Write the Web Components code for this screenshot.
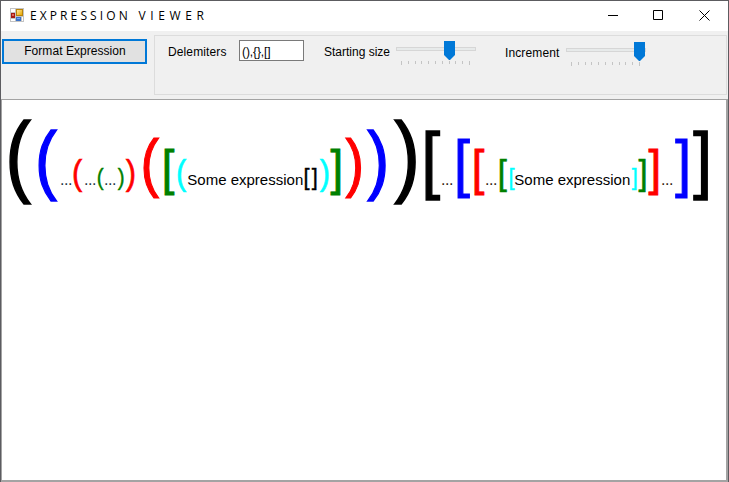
<!DOCTYPE html>
<html lang="en"><head><meta charset="utf-8"><title>Expression Viewer</title>
<style>html,body{margin:0;width:729px;height:482px;overflow:hidden;background:#fff}</style></head>
<body><expression-window></expression-window>
<script>
class Part extends HTMLElement{
  connectedCallback(){this.attachShadow({mode:'open'}).innerHTML=this.view()}
}
customElements.define('title-bar',class extends Part{view(){return `<style>
:host{display:flex;height:30px;background:#fff;align-items:center;box-sizing:border-box;padding-left:9px;font:12px "Open Sans","Noto Sans",sans-serif;color:#000}
.icon{width:14px;height:14px;margin-right:6px;flex:none;position:relative;top:-1px}
.name{flex:1;white-space:pre;letter-spacing:3.1px;line-height:16px}
.wide{letter-spacing:4.6px}
.controls{display:flex;height:30px}.controls svg{width:46px;height:30px;display:block;fill:none;stroke:#000}
</style>
<svg class="icon" viewBox="0 0 14 14"><path fill="#c3c3c3" d="M0 0h14v14H0z"/><path fill="#fff" d="M1 1h4v3H1zM1 11h4v2H1zM12 9h1v4h-1z"/><defs><linearGradient id="y" x2="1" y2="1"><stop stop-color="#ffe79a"/><stop offset="1" stop-color="#e8a800"/></linearGradient></defs><path fill="#b98308" d="M6 1h7v7H6z"/><path fill="url(#y)" d="M7 2h5v5H7z"/><path fill="#a51b13" d="M1 5h4v5H1z"/><path fill="#e0675b" d="M2 6h2v2H2z"/><path fill="#3c72c8" d="M6 9h5v4H6z"/><path fill="#78aaf0" d="M7 10h3v1H7z"/></svg>
<span class="name">EXPRESSION<span class="wide"> VIEWER</span></span>
<div class="controls"><svg><path d="M18 14.500h10"/></svg><svg><path d="M17.500 9.500h9v9h-9z"/></svg><svg><path d="M17.500 9.500l10 10m0-10l-10 10"/></svg></div>`}});
customElements.define('push-button',class extends Part{view(){return `<style>
:host{display:block;width:145px;height:25px;box-sizing:border-box}
button{display:block;width:100%;height:100%;padding:0 0 0 1px;border:2px solid #0078d7;background:#e1e1e1;color:#000;font:12px/21px "Liberation Sans",Arial,sans-serif;letter-spacing:.05px}
</style><button><slot></slot></button>`}});
customElements.define('track-bar',class extends Part{view(){const v=+this.getAttribute('value');return `<style>
:host{display:block;width:80px;height:26px}svg{display:block;overflow:visible}
</style><svg width="80" height="26"><rect x=".5" y="7.500" width="79" height="3" fill="#e7eaea" stroke="#d6d6d6"/><path stroke="#c4c4c4" d="${Array.from({length:11},(_,i)=>`M${Math.round(5+i*6.8)+.5} ${21}v${i%10?3:4}`).join('')}"/><path fill="#0078d7" d="M${v} 1h11v14l-5 5h-1l-5-5z"/></svg>`}});
customElements.define('tool-panel',class extends Part{view(){return `<style>
:host{display:flex;height:68px;background:#f0f0f0;box-sizing:border-box;padding:4px 1px 4px 1px;font:12px/15px "Liberation Sans",Arial,sans-serif;letter-spacing:.12px;color:#000}
push-button{margin:4px 7px 0 0;flex:none}
fieldset{flex:1;margin:0;padding:0;min-width:0;border:1px solid #dcdcdc;box-sizing:border-box;display:flex;align-items:flex-start}
label{white-space:nowrap;flex:none}
input{box-sizing:border-box;width:65px;height:21px;border:1px solid #7a7a7a;background:#fff;padding:2px 2px 0;margin:4px 20px 0 0;font:12px/15px "Liberation Sans",Arial,sans-serif;letter-spacing:-.1px;color:#000;flex:none}
</style><push-button>Format Expression</push-button><fieldset>
<label style="width:71px;margin:9px 0 0 13px">Delemiters</label><input value="(),{},[]">
<label style="width:72px;margin-top:9px;letter-spacing:0">Starting size</label><track-bar value="48" style="margin-top:4px"></track-bar>
<label style="width:61px;margin:10px 0 0 29px">Increment</label><track-bar value="68" style="margin-top:5px"></track-bar>
</fieldset>`}});
customElements.define('expression-view',class extends Part{view(){
const tokens=[['(','#000',90,9],['(','#00f',77,38.5],['...','#234',16,61],['(','red',36,73.5],['...','#234',16,85],['(','green',24,97],['...','#234',16,105],[')','green',24,117.5],[')','red',36,125.5],['(','red',65,143],['[','green',50,164],['(','cyan',36,177],['Some expression','#000',15,187.5],['[','#000',24,304.5],[']','#000',24,311],[')','cyan',36,319],[']','green',50,330],[')','red',65,345.5],[')','#00f',77,367.5],[')','#000',90,394],['[','#000',75,425],['...','#321',16,442],['[','#00f',63,457],['[','red',50,474],['...','#321',16,486],['[','green',36,499],['[','cyan',24,509],['Some expression','#000',15,514.5],[']','cyan',24,631],[']','green',36,638],[']','red',50,648],['...','#321',16,662],[']','#00f',63,675],[']','#000',75,693]];
// Side bearings in em, so each token box begins at its ink.
const bearing={'(':.061,')':.01,'[':.07,']':.012,'.':.09,'S':.045};
return `<style>
:host{display:flex;height:383px;box-sizing:border-box;border:1px solid #a3a3a3;border-right-width:2px;border-bottom-width:2px;background:#fff;padding-left:7.5px;align-items:baseline;font-family:"Liberation Sans",Arial,sans-serif;overflow:hidden}
span{flex:none;white-space:pre;line-height:1}i{display:inline-block;height:85px;width:0}
.mark{-webkit-text-stroke:.018em currentColor;transform-origin:0 0}
.round{transform:scaleX(.87)}.square{transform:scaleX(.92)}
.dots{letter-spacing:-.45px}
</style><i></i>${tokens.map(([t,c,s,x],n)=>`<span class="${t=='...'?'dots':t.length==1?'mark '+('()'.includes(t)?'round':'square'):''}" style="width:${(tokens[n+1]?.[3]??709)-x}px;color:${c};font-size:${t.length==1?s*.985:s}px;text-indent:${-bearing[t[0]]*s}px">${t}</span>`).join('')}`}});
customElements.define('expression-window',class extends Part{view(){return `<style>
:host{display:block;box-sizing:border-box;width:729px;height:482px;border:1px solid #5c5c60;border-bottom:0;overflow:hidden;background:#f0f0f0}
</style><title-bar></title-bar><tool-panel></tool-panel><expression-view></expression-view>`}});
</script></body></html>
